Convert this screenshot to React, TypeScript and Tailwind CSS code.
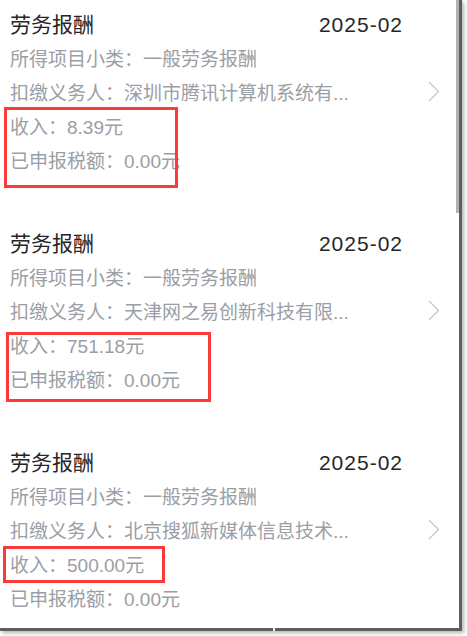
import React from "react";

interface Record {
  title: string;
  period: string;
  category: string;
  payer: string;
  income: string;
  taxed: string;
  markClass: string;
}

const records: Record[] = [
  {
    title: "劳务报酬",
    period: "2025-02",
    category: "一般劳务报酬",
    payer: "深圳市腾讯计算机系统有...",
    income: "8.39元",
    taxed: "0.00元",
    markClass: "left-[4px] top-[107px] w-[174px] h-[81px]",
  },
  {
    title: "劳务报酬",
    period: "2025-02",
    category: "一般劳务报酬",
    payer: "天津网之易创新科技有限...",
    income: "751.18元",
    taxed: "0.00元",
    markClass: "left-[6px] top-[113px] w-[205px] h-[70px]",
  },
  {
    title: "劳务报酬",
    period: "2025-02",
    category: "一般劳务报酬",
    payer: "北京搜狐新媒体信息技术...",
    income: "500.00元",
    taxed: "0.00元",
    markClass: "left-[3px] top-[108px] w-[162px] h-[37px]",
  },
];

function Chevron() {
  return (
    <svg width="12" height="21" viewBox="0 0 12 21" fill="none">
      <polyline
        points="1.5,1.5 10.5,10.5 1.5,19.5"
        stroke="#c9c9ce"
        strokeWidth="1.4"
        strokeLinecap="round"
        strokeLinejoin="round"
      />
    </svg>
  );
}

function RecordCard({ record }: { record: Record }) {
  return (
    <div className="relative h-[219px] pl-[10px] pt-[10px]">
      {/* Title row */}
      <div className="flex w-[393px] items-center justify-between h-[30px] text-[#262626]">
        <span className="text-[21px]">{record.title}</span>
        <span className="text-[21px] tracking-[1px]">{record.period}</span>
      </div>

      {/* Detail lines */}
      <div className="mt-[3px] flex flex-col text-[19px] text-[#9b9ea5]">
        <div className="h-[34px] leading-[34px]">所得项目小类：{record.category}</div>
        <div className="flex h-[34px] items-center">
          <span className="leading-[34px]">扣缴义务人：{record.payer}</span>
          <span className="ml-auto mr-[19px] mt-[-6px]">
            <Chevron />
          </span>
        </div>
        <div className="h-[34px] leading-[34px]">收入：{record.income}</div>
        <div className="h-[34px] leading-[34px]">已申报税额：{record.taxed}</div>
      </div>

      {/* Annotation box */}
      <div
        className={`pointer-events-none absolute border-[3px] border-[#fb3a3a] ${record.markClass}`}
      />
    </div>
  );
}

export default function App() {
  return (
    <div
      className="relative h-[636px] w-[467px] overflow-hidden bg-white"
      style={{ fontFamily: '"Liberation Sans", "Noto Sans CJK SC", sans-serif' }}
    >
      <div className="relative h-[631px] w-[462px] overflow-hidden border-b-[3px] border-r-[3px] border-[#5e5e5e] bg-white shadow-[2px_2px_4px_rgba(0,0,0,0.3)]">
        {records.map((r, i) => (
          <RecordCard key={i} record={r} />
        ))}

        {/* Scroll thumb */}
        <div className="absolute right-0 top-0 h-[213px] w-[3px] bg-[#b3b3b3]" />
      </div>
      {/* small gap in bottom edge */}
      <div className="absolute left-[273px] top-[628px] h-[3px] w-[2px] bg-white" />
    </div>
  );
}
